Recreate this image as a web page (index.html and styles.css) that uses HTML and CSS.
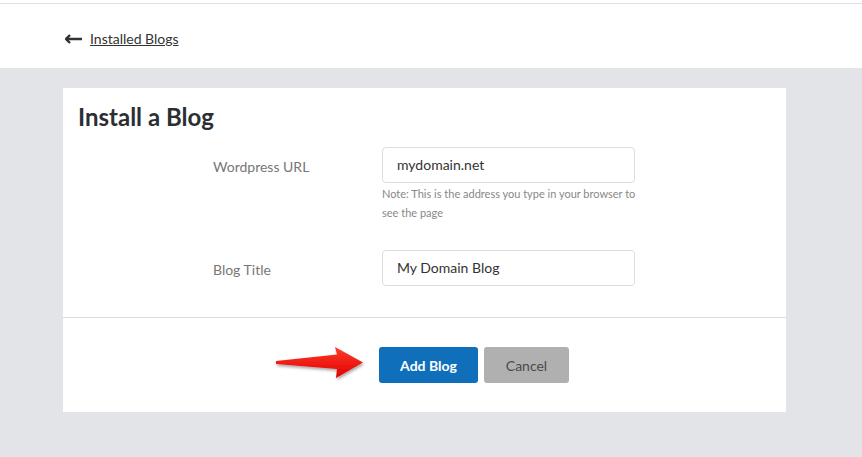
FILE: index.html
```html
<!DOCTYPE html>
<html lang="en">
<head>
  <meta charset="UTF-8">
  <title>Install a Blog</title>
  <link rel="stylesheet" href="styles.css">
</head>
<body>
  <div class="topbar">
    <div class="topbar-inner">
      <a class="back" href="#">
        <svg class="back-icon" width="18" height="10" viewBox="0 0 18 10"><path d="M5 1 L1 5 L5 9 M1 5 H17" fill="none" stroke="#333" stroke-width="2.4"/></svg>
        <span>Installed Blogs</span>
      </a>
    </div>
  </div>

  <div class="main">
    <div class="card">
      <h2 class="title">Install a Blog</h2>

      <div class="form">
        <div class="row">
          <label class="label">Wordpress URL</label>
          <div class="field">
            <div class="input">mydomain.net</div>
          </div>
        </div>
        <p class="note">Note: This is the address you type in your browser to see the page</p>

        <div class="row row-gap">
          <label class="label">Blog Title</label>
          <div class="field">
            <div class="input">My Domain Blog</div>
          </div>
        </div>
      </div>

      <div class="actions">
        <svg class="pointer" width="96" height="40" viewBox="0 0 96 40">
          <defs>
            <linearGradient id="red" x1="0" y1="0" x2="0" y2="1">
              <stop offset="0" stop-color="#ff3b2a"/>
              <stop offset="1" stop-color="#e00000"/>
            </linearGradient>
            <filter id="sh" x="-20%" y="-30%" width="140%" height="160%">
              <feDropShadow dx="1" dy="2" stdDeviation="1.5" flood-color="#000" flood-opacity="0.35"/>
            </filter>
          </defs>
          <path d="M2 16 L63 9.5 L61 2 L89 17.5 L62 33 L63 24 L2 19 Z" fill="url(#red)" filter="url(#sh)"/>
        </svg>
        <button class="btn btn-primary">Add Blog</button>
        <button class="btn btn-cancel">Cancel</button>
      </div>
    </div>
  </div>
</body>
</html>
```

FILE: styles.css
```css
body { margin: 0; font-family: Lato, "Open Sans", sans-serif; background: #e3e4e8; color: #333; }
.topbar { background: #fff; padding-top: 3px; }
.topbar-inner { border-top: 1px solid #dfe0e4; height: 64px; display: flex; align-items: center; padding-left: 65px; }
.back { display: flex; align-items: center; gap: 7px; color: #333; font-size: 14px; text-decoration: underline; margin-top: 5px; }
.back-icon { display: block; }

.main { padding: 20px 76px 46px 63px; }
.card { background: #fff; width: 723px; }
.title { margin: 0; padding: 14px 15px 15px; font-size: 24px; line-height: 30px; font-weight: 700; color: #2b2f33; }

.form { padding-left: 150px; padding-bottom: 31px; border-bottom: 1px solid #ddd; }
.row { display: flex; align-items: center; }
.row-gap { margin-top: 28px; }
.label { width: 169px; font-size: 14px; color: #777; padding-top: 3px; }
.field { width: 253px; }
.input { box-sizing: border-box; height: 36px; border: 1px solid #ddd; border-radius: 4px; padding: 0 14px; font-size: 14px; line-height: 34px; color: #333; }
.note { margin: 1px 0 0 169px; width: 262px; font-size: 11px; line-height: 19px; color: #888; }

.actions { position: relative; display: flex; gap: 6px; padding: 29px 0 29px 316px; }
.pointer { position: absolute; left: 211px; top: 27px; }
.btn { height: 36px; border: 0; border-radius: 3px; font-family: inherit; font-size: 14px; padding: 0; }
.btn-primary { width: 99px; background: #0f6fba; color: #fff; font-weight: 700; }
.btn-cancel { width: 85px; background: #b0b0b0; color: #4a4a4a; }
```
